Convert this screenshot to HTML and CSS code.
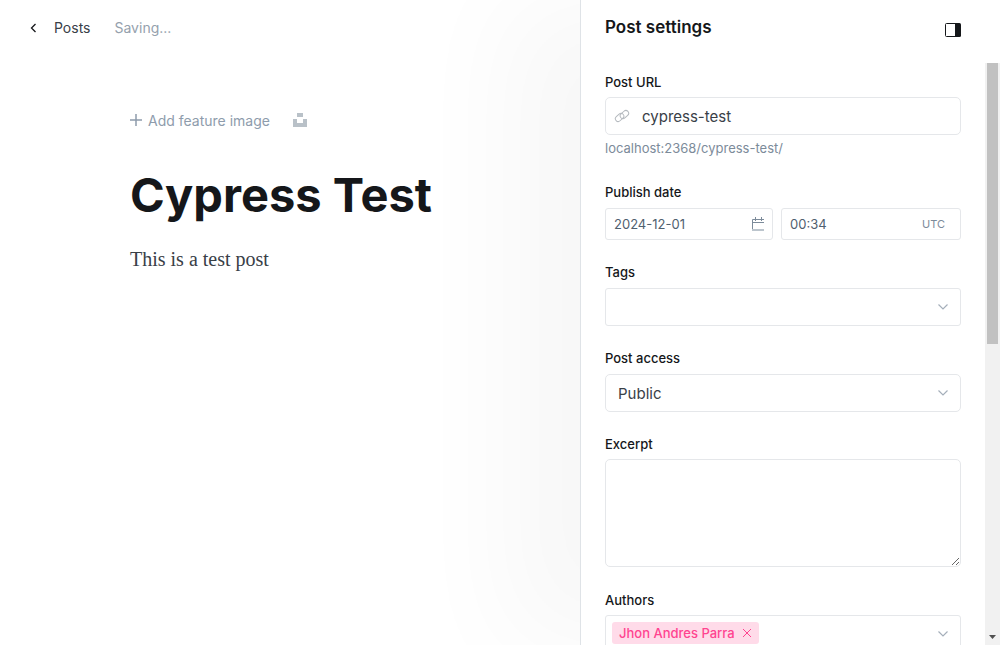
FILE: index.html
```html
<!DOCTYPE html>
<html lang="en">
<head>
<meta charset="utf-8">
<meta name="viewport" content="width=device-width, initial-scale=1">
<title>Cypress Test</title>
<link rel="stylesheet" href="styles.css">
</head>
<body>
<div class="app">
  <main class="editor">
    <header class="topbar">
      <a class="back" href="#">
        <svg class="back-icon" viewBox="0 0 8 10" width="8" height="10" aria-hidden="true"><path d="M5.500 2 1.500 6l4 4"/></svg>
        <span>Posts</span>
      </a>
      <span class="status">Saving...</span>
    </header>
    <article class="post">
      <div class="feature">
        <button class="feature-add" type="button">
          <svg viewBox="0 0 12 12" width="12" height="12" aria-hidden="true"><path d="M6 0v12M0 6h12"/></svg>
          <span>Add feature image</span>
        </button>
        <button class="unsplash" type="button" aria-label="Choose an Unsplash image">
          <svg viewBox="0 0 14 14" width="14" height="14" aria-hidden="true"><path d="M4 0h6v4H4zM0 6h4v4h6V6h4v8H0z"/></svg>
        </button>
      </div>
      <h1 class="post-title">Cypress Test</h1>
      <p class="post-body">This is a test post</p>
    </article>
  </main>

  <aside class="panel">
    <header class="panel-head">
      <h2 class="panel-title">Post settings</h2>
      <button class="panel-toggle" type="button" aria-label="Toggle settings">
        <svg viewBox="0 0 16 14" width="16" height="14" aria-hidden="true"><path d="M10.500.5H1.500q-1 0-1 1v11q0 1 1 1h9" fill="none" stroke="#15171a"/><path d="M10 0h4.500q1.500 0 1.500 1.500v11q0 1.500-1.500 1.500H10z" fill="#15171a"/></svg>
      </button>
    </header>
    <div class="panel-body">
      <form class="fields">
        <div class="field">
          <label class="label" for="url">Post URL</label>
          <div class="control">
            <svg class="link-icon" viewBox="0 0 16 14" width="16" height="14" aria-hidden="true"><rect x="-4.700" y="-2.800" width="9.400" height="5.600" rx="2.800" transform="translate(5.600 8.400) rotate(-42)"/><rect x="-4.700" y="-2.800" width="9.400" height="5.600" rx="2.800" transform="translate(10.400 5.600) rotate(-42)"/></svg>
            <input class="input" id="url" type="text" value="cypress-test">
          </div>
          <p class="hint">localhost:2368/cypress-test/</p>
        </div>
        <div class="field field-loose">
          <label class="label" for="date">Publish date</label>
          <div class="date-row">
            <div class="control control-small">
              <input class="input input-small" id="date" type="text" value="2024-12-01">
              <svg class="calendar" viewBox="0 0 12 14" width="12" height="14" aria-hidden="true"><path d="M.5 13.500v-11H12M3.500 0v4M9.500 0v4"/><path d="M0 5.500h12"/><path class="calendar-base" d="M0 13h12"/></svg>
            </div>
            <div class="control control-small control-time">
              <input class="input input-small" type="text" value="00:34" aria-label="Publish time">
              <span class="zone">UTC</span>
            </div>
          </div>
        </div>
        <div class="field field-loose">
          <label class="label" for="tags">Tags</label>
          <div class="control control-token">
            <input class="input" id="tags" type="text">
            <svg class="chevron" viewBox="0 0 10 6" width="10" height="6" aria-hidden="true"><path d="m.5.5 4.500 4.500L9.500.5"/></svg>
          </div>
        </div>
        <div class="field field-loose">
          <label class="label" for="access">Post access</label>
          <div class="control">
            <select class="input" id="access"><option>Public</option><option>Members only</option></select>
            <svg class="chevron" viewBox="0 0 10 6" width="10" height="6" aria-hidden="true"><path d="m.5.5 4.500 4.500L9.500.5"/></svg>
          </div>
        </div>
        <div class="field">
          <label class="label" for="excerpt">Excerpt</label>
          <textarea class="excerpt" id="excerpt"></textarea>
        </div>
        <div class="field">
          <label class="label" for="authors">Authors</label>
          <div class="control control-token">
            <span class="token">Jhon Andres Parra
              <button class="token-remove" type="button" aria-label="Remove author"><svg viewBox="0 0 10 10" width="10" height="10" aria-hidden="true"><path d="m1 1 8 8M9 1 1 9"/></svg></button>
            </span>
            <input class="input" id="authors" type="text">
            <svg class="chevron" viewBox="0 0 10 6" width="10" height="6" aria-hidden="true"><path d="m.5.5 4.500 4.500L9.500.5"/></svg>
          </div>
        </div>
      </form>
      <div class="scrollbar" aria-hidden="true">
        <div class="thumb"></div>
        <svg viewBox="0 0 15 15" width="15" height="15"><path d="M4 5h7L7.500 9z"/></svg>
      </div>
    </div>
  </aside>
</div>
</body>
</html>
```
FILE: styles.css
```css
* { box-sizing: border-box; }

body {
  margin: 0;
  background: #fff;
  color: #15171a;
  font-family: Inter, "Liberation Sans", sans-serif;
}

button, input, select, textarea { font: inherit; color: inherit; }

button {
  display: inline-flex;
  align-items: center;
  padding: 0;
  border: 0;
  background: none;
}

.app {
  display: grid;
  grid-template-columns: minmax(0, 1fr) 420px;
  height: 100vh;
  overflow: hidden;
}

/* Editor */
.topbar {
  display: flex;
  align-items: center;
  gap: 24px;
  height: 54px;
  padding: 0 30px;
  font-size: 14px;
}

.back {
  display: flex;
  align-items: center;
  gap: 16px;
  color: #394047;
  text-decoration: none;
}

.back-icon {
  fill: none;
  overflow: visible;
  stroke: #15171a;
  stroke-width: 1.3;
}

.status { color: #95a1ad; }

.post { padding: 55px 24px 0 130px; }

.feature {
  display: flex;
  align-items: center;
  gap: 23px;
  height: 22px;
}

.feature-add {
  gap: 6px;
  color: #8e9cac;
  font-size: 14px;
}

.feature-add svg { stroke: #8e9cac; stroke-width: 1.5; }

.unsplash svg { fill: #b9c1c8; }

.post-title {
  margin: 35px 0 0;
  font-size: 47px;
  font-weight: 700;
  line-height: 58px;
}

.post-body {
  margin: 19px 0 0;
  color: #394047;
  font-family: "Liberation Serif", serif;
  font-size: 20px;
  line-height: 32px;
}

/* Settings panel */
.panel {
  display: flex;
  flex-direction: column;
  min-height: 0;
  border-left: 1px solid #dfe3e7;
  background: #fff;
  box-shadow: -76px 0 100px rgba(0, 0, 0, 0.032);
}

.panel-head {
  display: flex;
  flex: none;
  align-items: center;
  justify-content: space-between;
  height: 63px;
  padding: 0 39px 4px 24px;
}

.panel-title {
  margin: 0 0 6px;
  font-size: 17px;
  font-weight: 600;
}

.panel-body {
  display: grid;
  flex: 1;
  grid-template-columns: minmax(0, 1fr) 15px;
  grid-template-rows: minmax(0, 1fr);
  min-height: 0;
}

.fields {
  overflow: hidden;
  padding: 10px 24px 0;
}

.field { margin-bottom: 24px; }

.label {
  display: block;
  margin-bottom: 6px;
  font-size: 13px;
  font-weight: 500;
  line-height: 18px;
}

.field-loose { margin-bottom: 23px; }

.field-loose .label { margin-bottom: 7px; }

.control {
  display: flex;
  align-items: center;
  gap: 8px;
  height: 38px;
  padding: 0 12px 0 8px;
  border: 1px solid #e5e7ea;
  border-radius: 5px;
  background: #fff;
}

.input {
  flex: 1;
  width: 0;
  min-width: 0;
  padding: 0 4px;
  border: 0;
  outline: 0;
  background: none;
  color: #394047;
  font-size: 15px;
  appearance: none;
}

.link-icon {
  fill: none;
  stroke: #b4b9be;
}

.hint {
  margin: 3px 0 25px;
  color: #7c8b9a;
  font-size: 13px;
  line-height: 20px;
}

.date-row {
  display: grid;
  grid-template-columns: 168fr 180fr;
  gap: 8px;
}

.control-small {
  height: 32px;
  padding: 0 8px;
  border-radius: 3px;
}

.control-time { padding-right: 15px; }

.input-small {
  padding: 0;
  color: #50606f;
  font-size: 13px;
}

.calendar {
  fill: none;
  stroke: #7c8b9a;
}

.calendar-base {
  stroke: #bcc5cd;
  stroke-width: 2;
}

.zone {
  color: #7c8b9a;
  font-size: 11px;
}

.control-token {
  padding-left: 6px;
  border-radius: 3px;
}

.chevron {
  flex: none;
  fill: none;
  overflow: visible;
  stroke: #a5afba;
  stroke-width: 1.2;
}

.excerpt {
  display: block;
  width: 100%;
  height: 108px;
  padding: 8px 12px;
  border: 1px solid #e5e7ea;
  border-radius: 5px;
  outline: 0;
  resize: vertical;
}

.token {
  display: flex;
  align-items: center;
  gap: 7px;
  height: 22px;
  margin-bottom: 2px;
  padding: 0 7px;
  border-radius: 3px;
  background: #ffdbe9;
  color: #ff4490;
  font-size: 13px;
  font-weight: 500;
}

.token-remove svg { stroke: #ff4490; }

.scrollbar {
  display: flex;
  flex-direction: column;
  justify-content: space-between;
  background: #f1f1f1;
}

.scrollbar svg { fill: #505050; }

.thumb {
  height: 281px;
  margin: 0 2px;
  background: #c1c1c1;
}
```
